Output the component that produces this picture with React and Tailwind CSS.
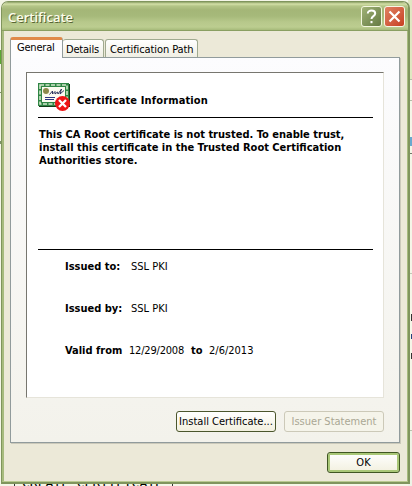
import React from 'react';

function CertificateIcon() {
  return (
    <svg width="33" height="29" viewBox="0 0 33 29" className="shrink-0">
      <rect x="1" y="1" width="31" height="23" fill="#123d18" />
      <rect x="0" y="0" width="31" height="23" fill="#2f8544" />
      <rect x="2" y="2" width="27" height="19" fill="none" stroke="#d3e8cb" strokeWidth="1.600" strokeDasharray="4 1.500" />
      <rect x="4" y="4" width="23" height="15" fill="#fbfbf0" />
      <circle cx="8" cy="8" r="3" fill="#8c8a4c" />
      <path d="M11.500 11.500l3-3.500 0 3 2.500-2.500 0 2.500 2.500-2 .5 2 3.500-5 -1.500 5 4-3.500" fill="none" stroke="#1c2450" strokeWidth="0.900" />
      <path d="M7 14.500h10M7 16.500h9" stroke="#2c3580" strokeWidth="1" />
      <circle cx="24.500" cy="20.500" r="7.500" fill="#ee1515" />
      <path d="M21 17l7 7M28 17l-7 7" stroke="#fff" strokeWidth="2.300" />
    </svg>
  );
}

function Background() {
  return (
    <div className="absolute inset-0 overflow-hidden bg-[#f5f6e8]">
      <div className="absolute left-0 top-[50px] h-[14px] w-[3px] bg-[#5aa832]" />
      <div className="absolute left-0 top-[92px] h-px w-[3px] bg-[#7d9468]" />
      <div className="absolute left-0 top-[141px] h-[3px] w-[3px] bg-[#7d9468]" />
      <div className="absolute right-0 top-0 h-[80px] w-[4px] bg-[#dfe8c2]" />
      <div className="absolute right-0 top-[79px] h-px w-[4px] bg-[#b4bda8]" />
      <div className="absolute right-0 top-[100px] h-px w-[4px] bg-[#b4bda8]" />
      <div className="absolute right-0 top-[137px] h-[9px] w-[3px] bg-[#6aa9ce]" />
      <div className="absolute right-0 top-[153px] h-px w-[4px] bg-[#6f7768]" />
      <div className="absolute right-0 top-[273px] h-px w-[4px] bg-[#c2c9b8]" />
      <div className="absolute right-0 top-[314px] h-[7px] w-px bg-[#333]" />
      <div className="absolute right-0 top-[334px] h-[5px] w-px bg-[#23427b]" />
      <div className="absolute right-0 top-[353px] h-[6px] w-px bg-[#333]" />
      <div className="absolute bottom-0 right-0 h-[56px] w-[4px] border-t border-[#b9c2ae] bg-[#eef3e6]" />
      <div className="absolute left-[14px] top-[474px] h-[12px] w-[159px] whitespace-nowrap border-x border-[#333] pl-[7px] font-['DejaVu_Sans_Mono',monospace] text-[13px] leading-[18px] text-black">
        CREATE CERTIFICATE
      </div>
    </div>
  );
}

function TitleBar() {
  return (
    <div className="flex h-[29px] shrink-0 justify-between rounded-t-[6px] border-b border-[#8a9f62] bg-[linear-gradient(to_bottom,#8ca165_0px,#d4e0a8_2px,#b4c587_4px,#a4b677_8px,#a6b97a_14px,#b7c88b_20px,#bccd90_25px,#a6ba7a_28px)] pl-[6px] pr-[3px] pt-[4px]">
      <span className="pt-px font-['Open_Sans',sans-serif] text-[13px] font-semibold leading-[20px] tracking-[0px] text-[#fbfdec] [font-stretch:normal] [text-shadow:1px_1px_0_#586534]">
        Certificate
      </span>
      <div className="flex gap-[2px]">
        <div className="flex size-[21px] items-center justify-center rounded-[3px] border border-[#f3f7df] bg-linear-to-br from-[#a0b277] to-[#657b43]">
          <svg width="19" height="19" viewBox="0 0 19 19" fill="none" stroke="#fff" strokeWidth="2">
            <path d="M5.800 6.500c0-4 7.400-3.800 7.400 0 0 2.600-3.700 2.600-3.700 5.500" />
            <path d="M9.500 14v2.200" />
          </svg>
        </div>
        <div className="flex size-[21px] items-center justify-center rounded-[3px] border border-[#f8f6e6] bg-linear-to-br from-[#df8062] to-[#c73f20]">
          <svg width="19" height="19" viewBox="0 0 19 19" stroke="#fff" strokeWidth="2.200">
            <path d="M4.500 4.500l10 10M14.500 4.500l-10 10" />
          </svg>
        </div>
      </div>
    </div>
  );
}

function Tabs() {
  return (
    <div className="relative z-10 mb-[-1px] ml-[7px] flex h-[21px] items-end text-black">
      <div className="h-[21px] w-[53px] overflow-hidden whitespace-nowrap rounded-t-[3px] border-x border-t-[3px] border-x-[#919b9c] border-t-[#e08a4a] bg-[#fdfdfe] pl-[6px] leading-[15px] tracking-[-0.2px]">
        General
      </div>
      <div className="mb-px h-[18px] w-[41px] whitespace-nowrap rounded-t-[3px] border border-b-0 border-l-0 border-[#a0aa90] bg-linear-to-b from-white to-[#f0efe4] pl-[3px] leading-[19px] tracking-[-0.2px]">
        Details
      </div>
      <div className="mb-px ml-px h-[18px] w-[93px] whitespace-nowrap rounded-t-[3px] border border-b-0 border-[#a0aa90] bg-linear-to-b from-white to-[#f0efe4] pl-[4px] leading-[19px] tracking-[-0.1px]">
        Certification Path
      </div>
    </div>
  );
}

function Certificate() {
  return (
    <div className="flex h-[326px] w-[358px] flex-col border border-b-[#e6e4da] border-l-[#77766f] border-r-[#e6e4da] border-t-[#77766f] bg-white pl-[11px] pr-[10px] text-black">
      <div className="flex h-[45px] shrink-0 items-start border-b border-black pt-[10px]">
        <CertificateIcon />
        <b className="ml-[6px] mt-[10px] whitespace-nowrap leading-[15px] tracking-[0.14px]">Certificate Information</b>
      </div>
      <div className="h-[132px] shrink-0 whitespace-nowrap border-b border-black pl-px pt-[10px] font-bold leading-[13px]">
        <p>This CA Root certificate is not trusted. To enable trust,</p>
        <p>install this certificate in the Trusted Root Certification</p>
        <p>Authorities store.</p>
      </div>
      <div className="flex flex-col gap-[28px] whitespace-nowrap pl-[27px] pt-[10px] leading-[14px]">
        <div className="flex"><b className="w-[66px]">Issued to:</b><span>SSL PKI</span></div>
        <div className="flex"><b className="w-[66px]">Issued by:</b><span>SSL PKI</span></div>
        <div className="flex"><b className="w-[64px]">Valid from</b><span className="w-[62px] tracking-[-0.2px]">12/29/2008</span><b className="w-[18px]">to</b><span>2/6/2013</span></div>
      </div>
    </div>
  );
}

export default function App() {
  return (
    <div className="relative h-[486px] w-[412px] overflow-hidden font-['DejaVu_Sans_Condensed','DejaVu_Sans',sans-serif] text-[11px] [font-stretch:condensed]">
      <Background />
      <div className="relative ml-px flex h-[484px] w-[409px] flex-col pt-px">
        <div className="flex h-[483px] flex-col rounded-t-[7px] border border-b-2 border-r-2 border-[#80955d] bg-[#ece9d8]">
          <TitleBar />
          <div className="flex grow flex-col border-b border-l-2 border-r border-[#a7bb7e] border-b-[#bacb91] pt-[6px]">
            <div className="-ml-px flex flex-col">
              <Tabs />
              <div className="ml-[7px] flex h-[386px] w-[390px] flex-col border border-[#919b9c] bg-linear-to-b from-[#fcfcfe] to-[#f3f2eb] pl-[15px] pt-[14px] shadow-[1px_1px_0_#cbc9ba]">
                <Certificate />
                <div className="mt-[13px] flex gap-[8px] pl-[150px]">
                  <button className="h-[21px] w-[100px] whitespace-nowrap rounded-[3px] border border-[#4b562c] bg-linear-to-b from-white to-[#f2f0df] text-center leading-[19px] text-black">Install Certificate...</button>
                  <button className="h-[21px] w-[100px] whitespace-nowrap rounded-[3px] border border-[#ccc9b8] bg-[#f5f4ea] text-center leading-[19px] text-[#aaa794]">Issuer Statement</button>
                </div>
              </div>
            </div>
            <button className="mr-[7px] mt-[9px] h-[21px] w-[73px] self-end rounded-[3px] border border-[#3f5622] bg-linear-to-b from-white to-[#f2f0df] text-center leading-[19px] text-black shadow-[inset_0_0_0_2px_#a9c777]">OK</button>
          </div>
        </div>
      </div>
    </div>
  );
}
